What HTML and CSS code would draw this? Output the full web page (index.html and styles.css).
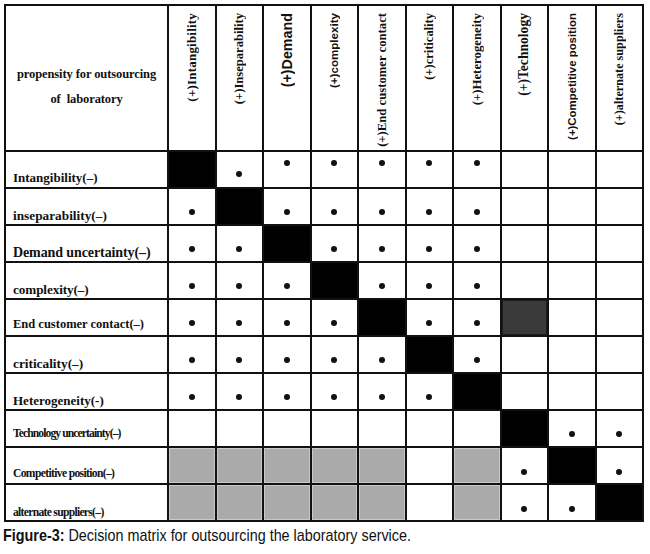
FILE: index.html
```html
<!DOCTYPE html>
<html>
<head>
<meta charset="utf-8">
<link rel="stylesheet" href="styles.css">
</head>
<body>
<div class="matrix">
  <div class="corner"><span class="c1">propensity for outsourcing</span><span class="c2">of&nbsp; laboratory</span></div>
  <div class="hd"><span class="v h1">(+)Intangibility</span></div>
  <div class="hd"><span class="v h2">(+)Inseparability</span></div>
  <div class="hd"><span class="v h3">(+)Demand</span></div>
  <div class="hd"><span class="v h4">(+)complexity</span></div>
  <div class="hd"><span class="v h5">(+)End customer contact</span></div>
  <div class="hd"><span class="v h6">(+)criticality</span></div>
  <div class="hd"><span class="v h7">(+)Heterogeneity</span></div>
  <div class="hd"><span class="v h8">(+)Technology</span></div>
  <div class="hd"><span class="v h9">(+)Competitive position</span></div>
  <div class="hd"><span class="v h10">(+)alternate suppliers</span></div>

  <div class="lab r1">Intangibility(–)</div>
  <div class="cell blk"></div>
  <div class="cell low"><i class="a"></i></div>
  <div class="cell high"><i class="a"></i></div>
  <div class="cell high"><i class="a"></i></div>
  <div class="cell high"><i class="a"></i></div>
  <div class="cell high"><i class="a"></i></div>
  <div class="cell high"><i class="a"></i></div>
  <div class="cell"></div>
  <div class="cell"></div>
  <div class="cell"></div>

  <div class="lab r2">inseparability(–)</div>
  <div class="cell"><i class="a"></i></div>
  <div class="cell blk"></div>
  <div class="cell"><i class="a"></i></div>
  <div class="cell"><i class="a"></i></div>
  <div class="cell"><i class="a"></i></div>
  <div class="cell"><i class="a"></i></div>
  <div class="cell"><i class="a"></i></div>
  <div class="cell"></div>
  <div class="cell"></div>
  <div class="cell"></div>

  <div class="lab r3">Demand uncertainty(–)</div>
  <div class="cell"><i class="a"></i></div>
  <div class="cell"><i class="a"></i></div>
  <div class="cell blk"></div>
  <div class="cell"><i class="a"></i></div>
  <div class="cell"><i class="a"></i></div>
  <div class="cell"><i class="a"></i></div>
  <div class="cell"><i class="a"></i></div>
  <div class="cell"></div>
  <div class="cell"></div>
  <div class="cell"></div>

  <div class="lab r4">complexity(–)</div>
  <div class="cell"><i class="a"></i></div>
  <div class="cell"><i class="a"></i></div>
  <div class="cell"><i class="a"></i></div>
  <div class="cell blk"></div>
  <div class="cell"><i class="a"></i></div>
  <div class="cell"><i class="a"></i></div>
  <div class="cell"><i class="a"></i></div>
  <div class="cell"></div>
  <div class="cell"></div>
  <div class="cell"></div>

  <div class="lab r5">End customer contact(–)</div>
  <div class="cell"><i class="a"></i></div>
  <div class="cell"><i class="a"></i></div>
  <div class="cell"><i class="a"></i></div>
  <div class="cell"><i class="a"></i></div>
  <div class="cell blk"></div>
  <div class="cell"><i class="a"></i></div>
  <div class="cell"><i class="a"></i></div>
  <div class="cell dk"></div>
  <div class="cell"></div>
  <div class="cell"></div>

  <div class="lab r6">criticality(–)</div>
  <div class="cell"><i class="a"></i></div>
  <div class="cell"><i class="a"></i></div>
  <div class="cell"><i class="a"></i></div>
  <div class="cell"><i class="a"></i></div>
  <div class="cell"><i class="a"></i></div>
  <div class="cell blk"></div>
  <div class="cell"><i class="a"></i></div>
  <div class="cell"></div>
  <div class="cell"></div>
  <div class="cell"></div>

  <div class="lab r7">Heterogeneity(-)</div>
  <div class="cell"><i class="a"></i></div>
  <div class="cell"><i class="a"></i></div>
  <div class="cell"><i class="a"></i></div>
  <div class="cell"><i class="a"></i></div>
  <div class="cell"><i class="a"></i></div>
  <div class="cell"><i class="a"></i></div>
  <div class="cell blk"></div>
  <div class="cell"></div>
  <div class="cell"></div>
  <div class="cell"></div>

  <div class="lab r8">Technology uncertainty(–)</div>
  <div class="cell"></div>
  <div class="cell"></div>
  <div class="cell"></div>
  <div class="cell"></div>
  <div class="cell"></div>
  <div class="cell"></div>
  <div class="cell"></div>
  <div class="cell blk"></div>
  <div class="cell"><i class="a"></i></div>
  <div class="cell"><i class="a"></i></div>

  <div class="lab r9">Competitive position(–)</div>
  <div class="cell gr"></div>
  <div class="cell gr"></div>
  <div class="cell gr"></div>
  <div class="cell gr"></div>
  <div class="cell gr"></div>
  <div class="cell"></div>
  <div class="cell gr"></div>
  <div class="cell lo2"><i class="a"></i></div>
  <div class="cell blk"></div>
  <div class="cell lo2"><i class="a"></i></div>

  <div class="lab r10">alternate suppliers(–)</div>
  <div class="cell gr"></div>
  <div class="cell gr"></div>
  <div class="cell gr"></div>
  <div class="cell gr"></div>
  <div class="cell gr"></div>
  <div class="cell"></div>
  <div class="cell gr"></div>
  <div class="cell lo2"><i class="a"></i></div>
  <div class="cell lo2"><i class="a"></i></div>
  <div class="cell blk"></div>
</div>
<p class="caption"><span class="cap-in"><b>Figure-3:</b> Decision matrix for outsourcing the laboratory service.</span></p>
</body>
</html>
```

FILE: styles.css
```css
html, body {
  margin: 0;
  padding: 0;
  background: #fff;
}

body {
  color: #111;
  font-family: "Liberation Serif", "Times New Roman", serif;
}

.matrix {
  display: grid;
  grid-template-columns: 161px repeat(10, 45.5px);
  grid-template-rows: 144px repeat(10, 35px);
  gap: 2px;
  padding: 2px;
  background: #111;
  width: max-content;
  margin: 4px 0 0 4px;
}

.corner {
  background: #fff;
  display: flex;
  flex-direction: column;
  align-items: center;
  padding-top: 56px;
  font-weight: bold;
  font-size: 12.5px;
  line-height: 25px;
  letter-spacing: -0.1px;
}

.hd {
  background: #fff;
  display: flex;
  flex-direction: column;
  align-items: center;
  padding-top: 7px;
}

.v {
  writing-mode: vertical-rl;
  transform: rotate(180deg);
  white-space: nowrap;
  font-weight: bold;
  line-height: 14px;
}

.h1 { font-size: 13px; letter-spacing: 0.2px; }
.h2 { font-size: 12.6px; }
.h3 { font-family: "Liberation Sans", Arial, sans-serif; font-size: 14.3px; }
.h4 { font-family: "Liberation Sans", Arial, sans-serif; font-size: 11.6px; }
.h5 { font-size: 12.7px; }
.h6 { font-size: 12.5px; }
.h7 { font-size: 12.8px; }
.h8 { font-size: 13.6px; }
.h9 { font-family: "Liberation Sans", Arial, sans-serif; font-size: 11.4px; }
.h10 { font-size: 12.2px; }

.lab {
  background: #fff;
  display: flex;
  align-items: flex-end;
  padding: 0 0 3px 7px;
  font-weight: bold;
  line-height: 13px;
  white-space: nowrap;
}

.r1 { font-size: 13px; }
.r2 { font-size: 13.3px; padding-bottom: 2px; }
.r3 { font-size: 14px; letter-spacing: -0.1px; padding-bottom: 2px; }
.r4 { font-size: 13.2px; letter-spacing: -0.1px; padding-bottom: 2px; }
.r5 { font-size: 12.5px; padding-bottom: 4px; }
.r6 { font-size: 13.3px; padding-bottom: 2px; }
.r7 { font-size: 13px; padding-bottom: 2px; }
.r8 { font-size: 11.6px; letter-spacing: -0.9px; padding-bottom: 6px; }
.r9 { font-size: 11.6px; letter-spacing: -0.65px; padding-bottom: 3px; }
.r10 { font-size: 11.6px; letter-spacing: -0.7px; padding-bottom: 1px; }

.cell {
  background: #fff;
  display: flex;
  justify-content: center;
  align-items: flex-start;
  padding-top: 20px;
}

.cell.high { padding-top: 8px; }
.cell.low { padding-top: 19px; }
.cell.lo2 { padding-top: 21px; }

.blk { background: #000; }

.gr {
  background: #aaa;
  box-shadow: inset 0 0 0 1px #c9c9c9;
}

.dk {
  background: #3a3a3a;
  box-shadow: inset 0 0 0 1px #1c1c1c;
}

.a {
  display: block;
  width: 6px;
  height: 6px;
  border-radius: 50%;
  background: #111;
}

.caption {
  margin: 4px 0 0 3px;
  font-family: "Liberation Sans", Arial, sans-serif;
  font-size: 17px;
  line-height: 20px;
  color: #111;
  white-space: nowrap;
}

.cap-in {
  display: inline-block;
  transform: scaleX(0.845);
  transform-origin: left center;
}
```
